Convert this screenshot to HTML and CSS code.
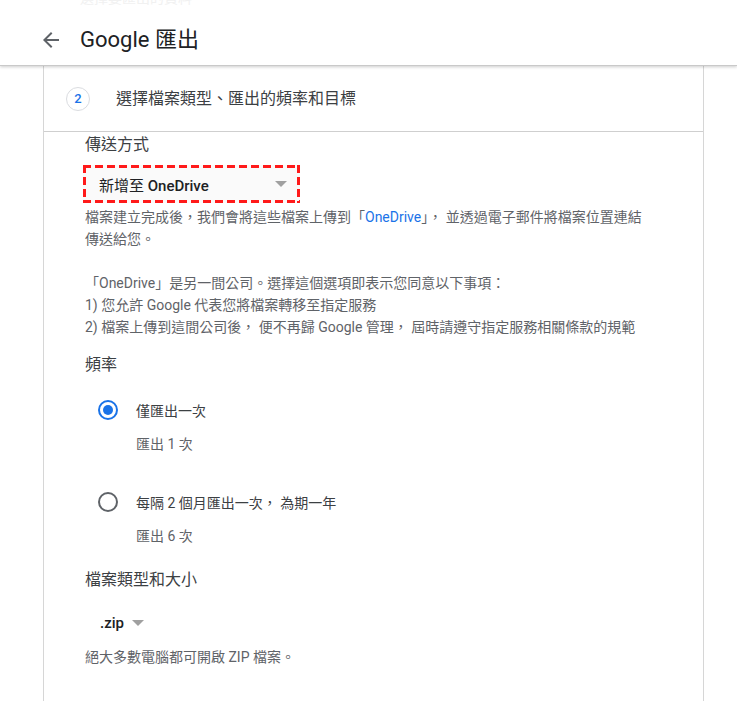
FILE: index.html
```html
<!DOCTYPE html>
<html lang="zh-Hant">
<head>
<meta charset="utf-8">
<title>Google 匯出</title>
<link rel="stylesheet" href="styles.css">
</head>
<body>
<header class="topbar">
  <div class="ghost">選擇要匯出的資料</div>
  <svg class="back" width="24" height="24" viewBox="0 0 24 24" aria-hidden="true"><path d="M20 11H7.83l5.59-5.59L12 4l-8 8 8 8 1.41-1.41L7.83 13H20v-2z" fill="#5f6368"/></svg>
  <h1 class="title">Google 匯出</h1>
</header>
<main class="card">
  <div class="step-head">
    <span class="step-num">2</span>
    <span class="step-title">選擇檔案類型、匯出的頻率和目標</span>
  </div>
  <div class="step-body">
    <div class="label">傳送方式</div>
    <div class="select dest">
      <span class="select-text">新增至 <span class="latin">OneDrive</span></span>
      <span class="caret"></span>
    </div>
    <p class="desc">檔案建立完成後，我們會將這些檔案上傳到「<span class="link">OneDrive</span>」， 並透過電子郵件將檔案位置連結<br>傳送給您。</p>
    <p class="desc gap">「OneDrive」是另一間公司。選擇這個選項即表示您同意以下事項：<br>1) 您允許 Google 代表您將檔案轉移至指定服務<br>2) 檔案上傳到這間公司後， 便不再歸 Google 管理， 屆時請遵守指定服務相關條款的規範</p>

    <div class="label freq">頻率</div>
    <div class="radio-row first">
      <span class="radio checked"></span>
      <span class="radio-label">僅匯出一次</span>
    </div>
    <div class="radio-sub">匯出 1 次</div>
    <div class="radio-row second">
      <span class="radio"></span>
      <span class="radio-label">每隔 2 個月匯出一次， 為期一年</span>
    </div>
    <div class="radio-sub">匯出 6 次</div>

    <div class="label type">檔案類型和大小</div>
    <div class="select zip">
      <span class="select-text latin">.zip</span>
      <span class="caret"></span>
    </div>
    <p class="desc last">絕大多數電腦都可開啟 ZIP 檔案。</p>
  </div>
</main>
</body>
</html>
```
FILE: styles.css
```css
html, body {
  margin: 0;
  padding: 0;
  background: #fff;
  font-family: Roboto, "Noto Sans CJK TC", "Noto Sans", sans-serif;
  color: #202124;
  overflow: hidden;
}

.topbar {
  position: relative;
  z-index: 2;
  height: 66px;
  box-sizing: border-box;
  padding: 14px 0 0 39px;
  display: flex;
  align-items: center;
  background: #fff;
  border-bottom: 1px solid #c9c9c9;
  box-shadow: 0 1px 3px rgba(0, 0, 0, 0.2);
}

.ghost {
  position: absolute;
  left: 80px;
  top: -12px;
  font-size: 14px;
  color: #f1f1f1;
  line-height: 20px;
}

.back {
  display: block;
  flex: none;
}

.title {
  margin: 0 0 0 17px;
  font-size: 22px;
  font-weight: 400;
  line-height: 28px;
  color: #202124;
}

.card {
  display: block;
  width: 661px;
  margin-left: 43px;
  box-sizing: border-box;
  border-left: 1px solid #d6d6d6;
  border-right: 1px solid #d6d6d6;
  min-height: 700px;
}

.step-head {
  height: 65px;
  border-bottom: 1px solid #cfcfcf;
  display: flex;
  align-items: center;
  padding-left: 22px;
}

.step-num {
  width: 22px;
  height: 22px;
  border: 1px solid #dadce0;
  border-radius: 50%;
  display: flex;
  align-items: center;
  justify-content: center;
  font-size: 13px;
  font-weight: 500;
  color: #1a73e8;
  flex: none;
}

.step-title {
  margin-left: 26px;
  font-size: 16px;
  color: #3c4043;
  line-height: 24px;
}

.step-body {
  padding: 1px 0 0 41px;
}

.label {
  font-size: 16px;
  line-height: 24px;
  color: #3c4043;
}

.select {
  display: flex;
  align-items: center;
  box-sizing: border-box;
}

.select-text {
  font-size: 15px;
  font-weight: 400;
  color: #202124;
}

.latin {
  font-weight: 500;
}

.caret {
  width: 0;
  height: 0;
  border-left: 6px solid transparent;
  border-right: 6px solid transparent;
  border-top: 6px solid #a0a0a0;
}

.dest {
  margin: 8px 0 0 -2px;
  width: 217px;
  height: 38px;
  padding: 0 13px 0 16px;
  justify-content: space-between;
  background:
    repeating-linear-gradient(90deg, #ff1a1a 0 8px, transparent 8px 12px) left top / 100% 3px no-repeat,
    repeating-linear-gradient(90deg, #ff1a1a 0 8px, transparent 8px 12px) left bottom / 100% 3px no-repeat,
    repeating-linear-gradient(180deg, #ff1a1a 0 8px, transparent 8px 12px) left top / 3px 100% no-repeat,
    repeating-linear-gradient(180deg, #ff1a1a 0 8px, transparent 8px 12px) right top / 3px 100% no-repeat,
    #fafafa;
}

.desc {
  margin: 3px 0 0 0;
  font-size: 14px;
  line-height: 22px;
  color: #5f6368;
  white-space: pre-line;
}

.desc.gap {
  margin-top: 22px;
}

.link {
  color: #1a73e8;
}

.freq {
  margin-top: 15px;
}

.radio-row {
  display: flex;
  align-items: center;
  height: 24px;
  padding-left: 13px;
}

.radio-row.first {
  margin-top: 21px;
}

.radio-row.second {
  margin-top: 35px;
}

.radio {
  width: 20px;
  height: 20px;
  box-sizing: border-box;
  border: 2px solid #5f6368;
  border-radius: 50%;
  display: flex;
  align-items: center;
  justify-content: center;
  flex: none;
}

.radio.checked {
  border-color: #1a73e8;
}

.radio.checked::after {
  content: "";
  width: 10px;
  height: 10px;
  border-radius: 50%;
  background: #1a73e8;
}

.radio-label {
  margin-left: 18px;
  font-size: 14px;
  color: #3c4043;
}

.radio-sub {
  margin: 11px 0 0 51px;
  font-size: 14px;
  line-height: 22px;
  color: #5f6368;
}

.type {
  margin-top: 21px;
}

.zip {
  margin-top: 19px;
  height: 24px;
  padding-left: 15px;
  gap: 8px;
}

.desc.last {
  margin-top: 11px;
}
```
